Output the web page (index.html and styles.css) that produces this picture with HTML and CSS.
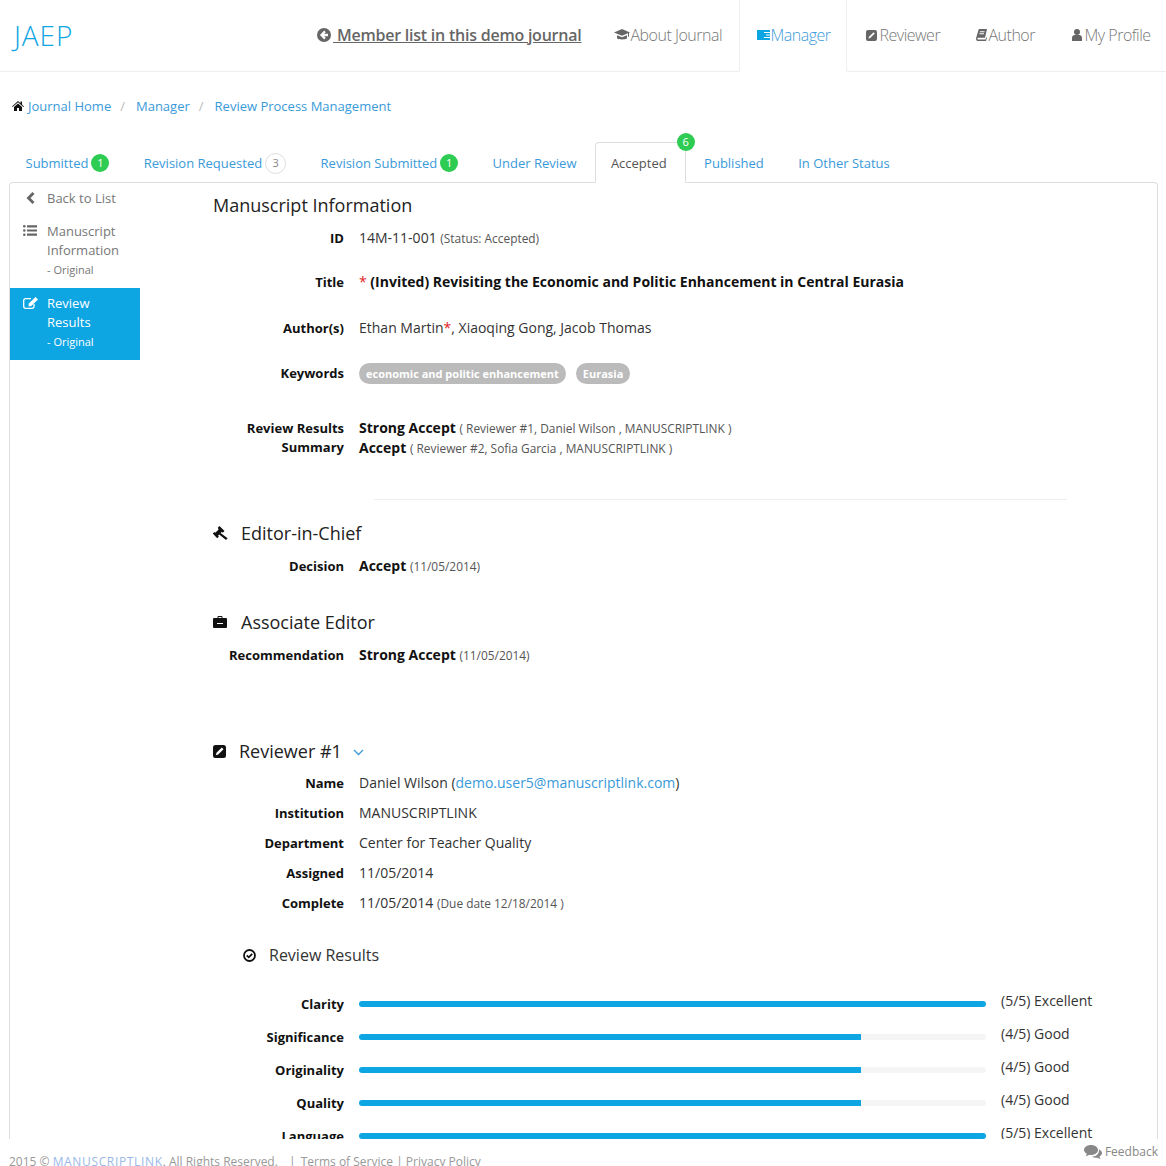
FILE: index.html
```html
<!DOCTYPE html>
<html lang="en">
<head>
    <meta charset="UTF-8">
    <title>JAEP</title>
    <link rel="stylesheet" href="styles.css">
</head>
<body>
<header class="topbar">
    <a class="logo">JAEP</a>
    <a class="member-link">
        <svg class="ico" width="14" height="14" viewBox="0 0 14 14"><path fill="#666" fill-rule="evenodd" d="M7 0a7 7 0 1 1 0 14A7 7 0 0 1 7 0zM7.2 2.6 2.9 7l4.3 4.400 1.600-1.600-1.700-1.600h3.900V5.800H7.100l1.700-1.600z"/></svg>
        <span>&nbsp;Member list in this demo journal</span>
    </a>
    <nav class="topnav">
        <a class="nav-item nav-about">
            <svg width="16" height="12" viewBox="0 0 16 12"><path fill="#666" d="M8 0 0 3.400l8 3.400 6-2.500v3.400h1V3.900l1-.5zM3 6.200v3c1 1.600 9 1.600 10 0v-3L8 8.300z"/></svg>About Journal
        </a>
        <a class="nav-item nav-active">
            <svg width="13" height="11" viewBox="0 0 13 11"><path fill="#0ea5e3" d="M0 1h13v10H0z"/><path fill="#fff" d="M7 3h6v1H7zM9 5.500h4v1H9zM7 8h6v1H7z"/></svg>Manager
        </a>
        <a class="nav-item nav-rev">
            <svg width="11" height="11" viewBox="0 0 11 11"><path fill="#666" fill-rule="evenodd" d="M2 0h7a2 2 0 0 1 2 2v7a2 2 0 0 1-2 2H2a2 2 0 0 1-2-2V2a2 2 0 0 1 2-2zm5.600 2.200L3 6.800 2.400 8.600l1.800-.6 4.600-4.600z"/></svg>Reviewer
        </a>
        <a class="nav-item nav-auth">
            <svg width="11" height="12" viewBox="0 0 11 12"><path fill="#666" fill-rule="evenodd" d="M2.800 0H11L9 8.800H2C1.300 8.800 1.300 10.600 2 10.600h7.500l1-2.600.5.800-1 3.200H1.800C.2 12-.2 10.200.2 8.800zM4 2.200l-.2 1h4.600l.2-1zM3.500 4.200l-.2 1h4.600l.2-1z"/></svg>Author
        </a>
        <a class="nav-item nav-prof">
            <svg width="10" height="12" viewBox="0 0 10 12"><circle cx="5" cy="3" r="3" fill="#666"/><path fill="#666" d="M0 12V8.500C0 7 1.500 6 2.500 6h5C8.500 6 10 7 10 8.500V12z"/></svg>My Profile
        </a>
    </nav>
</header>

<div class="breadcrumb">
    <svg width="12" height="10" viewBox="0 0 12 10"><path fill="#111" d="M6 0 0 5.400l.6.600L6 1.300 11.400 6l.6-.6-2-1.800V.6H8.500v1.700zM2 6v4h3V7h2v3h3V6L6 2.500z"/></svg>
    <a>Journal Home</a><span class="sep">/</span>
    <a>Manager</a><span class="sep">/</span>
    <a>Review Process Management</a>
</div>

<ul class="tabs">
    <li class="tab">Submitted <span class="badge">1</span></li>
    <li class="tab">Revision Requested <span class="badge badge-empty">3</span></li>
    <li class="tab">Revision Submitted <span class="badge">1</span></li>
    <li class="tab">Under Review</li>
    <li class="tab tab-active">Accepted<span class="badge badge-over">6</span></li>
    <li class="tab">Published</li>
    <li class="tab">In Other Status</li>
</ul>

<main class="panel">
    <aside class="sidebar">
        <a class="side-item side-back">
            <svg width="9" height="12" viewBox="0 0 9 12"><path fill="#666" d="M6.500 0 8.500 2 4.500 6l4 4-2 2L.5 6z"/></svg>
            <span>Back to List</span>
        </a>
        <a class="side-item side-info">
            <svg width="14" height="11" viewBox="0 0 14 11"><circle cx="1.300" cy="1.300" r="1.300" fill="#666"/><circle cx="1.300" cy="5.500" r="1.300" fill="#666"/><circle cx="1.300" cy="9.700" r="1.300" fill="#666"/><path fill="#666" d="M4 .2h10v2.200H4zM4 4.400h10v2.200H4zM4 8.600h10v2.200H4z"/></svg>
            <span>Manuscript Information<small>- Original</small></span>
        </a>
        <a class="side-item side-active">
            <svg width="15" height="12" viewBox="0 0 15 12"><path fill="none" stroke="#fff" stroke-width="1.300" d="M11 7v2.500A1.800 1.800 0 0 1 9.200 11.300H2.500A1.800 1.800 0 0 1 .7 9.500V3.500A1.800 1.800 0 0 1 2.500 1.700H8"/><path fill="#fff" d="M12.500 0 15 2.500 8 9.200H5.600V6.700z"/></svg>
            <span>Review Results<small>- Original</small></span>
        </a>
    </aside>

    <section class="content">
        <h2 class="title-main">Manuscript Information</h2>

        <div class="row row-id"><div class="lbl">ID</div><div class="val">14M-11-001 <small>(Status: Accepted)</small></div></div>
        <div class="row row-title"><div class="lbl">Title</div><div class="val"><b><span class="red">*</span> (Invited) Revisiting the Economic and Politic Enhancement in Central Eurasia</b></div></div>
        <div class="row row-author"><div class="lbl">Author(s)</div><div class="val">Ethan Martin<span class="red">*</span>, Xiaoqing Gong, Jacob Thomas</div></div>
        <div class="row row-keys"><div class="lbl">Keywords</div><div class="val"><span class="pill">economic and politic enhancement</span><span class="pill">Eurasia</span></div></div>
        <div class="row row-summary">
            <div class="lbl">Review Results Summary</div>
            <div class="val">
                <div class="sum-line"><b>Strong Accept</b> <small>( Reviewer #1, Daniel Wilson , MANUSCRIPTLINK )</small></div>
                <div class="sum-line"><b>Accept</b> <small>( Reviewer #2, Sofia Garcia , MANUSCRIPTLINK )</small></div>
            </div>
        </div>

        <hr class="divider">

        <h3 class="head head-chief">
            <svg width="15" height="14" viewBox="0 0 15 14"><path fill="#111" d="M6.500 0 11.500 5 9.800 6.700 8.900 5.800 7.600 7.100 14.600 12.200 13 14 6.200 8.500 5 9.700 5.900 10.600 4.200 12.300-.2 7.500 1.500 6 2.300 6.800 5.600 3.400 4.800 1.700z"/></svg>
            Editor-in-Chief
        </h3>
        <div class="row row-decision"><div class="lbl">Decision</div><div class="val"><b>Accept</b> <small>(11/05/2014)</small></div></div>

        <h3 class="head head-assoc">
            <svg width="14" height="12" viewBox="0 0 14 12"><path fill="#111" fill-rule="evenodd" d="M4.500 2V1a1 1 0 0 1 1-1h3a1 1 0 0 1 1 1v1H13a1 1 0 0 1 1 1v8a1 1 0 0 1-1 1H1a1 1 0 0 1-1-1V3a1 1 0 0 1 1-1zm1-1v1h3V1zM4 7v1h6V7z"/></svg>
            Associate Editor
        </h3>
        <div class="row row-decision"><div class="lbl">Recommendation</div><div class="val"><b>Strong Accept</b> <small>(11/05/2014)</small></div></div>

        <h3 class="head head-reviewer">
            <svg width="13" height="13" viewBox="0 0 13 13"><path fill="#111" fill-rule="evenodd" d="M2.500 0h8A2.500 2.500 0 0 1 13 2.500v8a2.500 2.500 0 0 1-2.500 2.500h-8A2.500 2.500 0 0 1 0 10.500v-8A2.500 2.500 0 0 1 2.500 0zm6.300 2.500L3.500 7.800 2.800 10.200l2.400-.7 5.300-5.300z"/></svg>
            <span class="rev-name">Reviewer #1</span>
            <svg class="chev" width="11" height="7" viewBox="0 0 11 7"><path fill="none" stroke="#3a9ad9" stroke-width="1.300" d="M1 1l4.500 4.500L10 1"/></svg>
        </h3>
        <div class="row row-rev"><div class="lbl">Name</div><div class="val">Daniel Wilson (<a class="link">demo.user5@manuscriptlink.com</a>)</div></div>
        <div class="row row-rev"><div class="lbl">Institution</div><div class="val">MANUSCRIPTLINK</div></div>
        <div class="row row-rev"><div class="lbl">Department</div><div class="val">Center for Teacher Quality</div></div>
        <div class="row row-rev"><div class="lbl">Assigned</div><div class="val">11/05/2014</div></div>
        <div class="row row-rev"><div class="lbl">Complete</div><div class="val">11/05/2014 <small>(Due date 12/18/2014 )</small></div></div>

        <h4 class="sub-head">
            <svg width="13" height="13" viewBox="0 0 13 13"><circle cx="6.500" cy="6.500" r="5.500" fill="none" stroke="#111" stroke-width="1.800"/><path fill="none" stroke="#111" stroke-width="1.800" d="M3.800 6.300l2 2 3.400-3.400"/></svg>
            Review Results
        </h4>

        <div class="score"><div class="lbl">Clarity</div><div class="track"><div class="fill" style="width:100%"></div></div><div class="score-text">(5/5) Excellent</div></div>
        <div class="score"><div class="lbl">Significance</div><div class="track"><div class="fill" style="width:80%"></div></div><div class="score-text">(4/5) Good</div></div>
        <div class="score"><div class="lbl">Originality</div><div class="track"><div class="fill" style="width:80%"></div></div><div class="score-text">(4/5) Good</div></div>
        <div class="score"><div class="lbl">Quality</div><div class="track"><div class="fill" style="width:80%"></div></div><div class="score-text">(4/5) Good</div></div>
        <div class="score"><div class="lbl">Language</div><div class="track"><div class="fill" style="width:100%"></div></div><div class="score-text">(5/5) Excellent</div></div>
    </section>
</main>

<footer class="footer">
    <div class="copy">2015 &copy; <a>MANUSCRIPTLINK</a>. All Rights Reserved. <span class="foot-sep">|</span> Terms of Service <span class="foot-sep2">|</span> Privacy Policy</div>
    <a class="feedback">
        <svg width="18" height="15" viewBox="0 0 18 15"><path fill="#888" d="M7 0c3.900 0 7 2.200 7 5s-3.100 5-7 5c-.6 0-1.200 0-1.800-.2C4 10.700 2.700 11 1.500 11.200 2.200 10.400 2.700 9.600 2.800 8.700 1.100 7.800 0 6.500 0 5 0 2.200 3.100 0 7 0z"/><path fill="#888" d="M15 4.500c1.800.8 3 2.100 3 3.600 0 1.400-1 2.700-2.500 3.500.2.900.6 1.700 1.200 2.400-1.100-.2-2.300-.6-3.300-1.300-.5.100-1 .1-1.400.1-1.600 0-3-.4-4.200-1.100 3.900-.1 7.200-2.700 7.200-6z"/></svg>
        Feedback
    </a>
</footer>
</body>
</html>
```

FILE: styles.css
```css
html, body {
    height: 100%;
}
body {
    margin: 0;
    height: 100vh;
    display: flex;
    flex-direction: column;
    overflow: hidden;
    font-family: "Open Sans", sans-serif;
    font-size: 14px;
    line-height: 20px;
    color: #333;
    background: #fff;
}
a {
    color: #3a9ad9;
    text-decoration: none;
}
small {
    font-size: 11.9px;
    color: #555;
}
b {
    font-weight: 700;
    color: #111;
}
.red {
    color: #e02222;
    font-weight: 400;
}

/* top bar */
.topbar {
    height: 72px;
    box-sizing: border-box;
    flex: none;
    display: flex;
    align-items: center;
    border-bottom: 1px solid #eee;
    padding: 0 0 2px 13px;
}
.logo {
    font-size: 28px;
    font-weight: 300;
    color: #0ea5e3;
    letter-spacing: 0.9px;
    margin-left: 1px;
    width: 303px;
}
.member-link {
    color: #666;
    font-size: 16px;
    font-weight: 600;
    letter-spacing: -0.23px;
    display: flex;
    align-items: center;
}
.member-link svg {
    margin-right: 2px;
}
.member-link span {
    text-decoration: underline;
}
.topnav {
    display: flex;
    height: 72px;
    margin-left: 33px;
    align-self: flex-start;
}
.nav-item {
    display: flex;
    align-items: center;
    color: #777;
    font-size: 16px;
    font-weight: 300;
    letter-spacing: -0.5px;
    box-sizing: border-box;
    padding-bottom: 2px;
}
.nav-about {
    width: 125px;
}
.nav-active {
    width: 108px;
    padding-left: 17px;
    color: #3a9ad9;
    border-left: 1px solid #eee;
    border-right: 1px solid #eee;
    border-bottom: 1px solid #fff;
    background: #fff;
}
.nav-rev {
    width: 110px;
    padding-left: 19px;
    gap: 2px;
}
.nav-auth {
    width: 96px;
    padding-left: 19px;
    gap: 1px;
}
.nav-prof {
    padding-left: 19px;
    gap: 2px;
}

/* breadcrumb */
.breadcrumb {
    flex: none;
    margin-top: 24px;
    padding-left: 12px;
    font-size: 13px;
    display: flex;
    align-items: center;
}
.breadcrumb svg {
    margin-right: 4px;
}
.sep {
    color: #bbb;
    margin: 0 11px 0 9px;
}

/* tabs */
.tabs {
    flex: none;
    list-style: none;
    margin: 26px 0 0;
    padding: 0 0 0 9.5px;
    display: flex;
    height: 41px;
    position: relative;
    z-index: 1;
    margin-bottom: -1px;
}
.tab {
    padding: 0 15px;
    margin-right: 2.4px;
    display: flex;
    align-items: center;
    gap: 3px;
    color: #3a9ad9;
    font-size: 13px;
    border: 1px solid transparent;
    border-bottom: 0;
    position: relative;
}
.tab-active {
    color: #555;
    background: #fff;
    border-color: #ddd;
    border-bottom: 1px solid #fff;
    border-radius: 4px 4px 0 0;
    height: 41px;
    box-sizing: border-box;
    padding: 0 18px 0 15px;
}
.badge {
    min-width: 18px;
    height: 18px;
    line-height: 18px;
    border-radius: 50%;
    background: #2ecc52;
    color: #fff;
    font-size: 11px;
    text-align: center;
}
.badge-empty {
    background: #fff;
    color: #888;
    border: 1px solid #ddd;
    height: 19px;
    min-width: 19px;
}
.badge-over {
    position: absolute;
    top: -10px;
    right: -10px;
}

/* panel */
.panel {
    flex: 1;
    min-height: 0;
    overflow: hidden;
    margin: 0 8px 0 9px;
    border: 1px solid #ddd;
    border-bottom: 0;
    border-radius: 4px 4px 0 0;
    display: flex;
}
.sidebar {
    width: 130px;
    flex: none;
    padding-top: 6px;
    font-size: 13px;
    line-height: 19px;
}
.side-item {
    display: flex;
    color: #777;
    padding-left: 13px;
}
.side-item svg {
    flex: none;
    margin-top: 3px;
}
.side-item span {
    margin-left: 9px;
    max-width: 78px;
}
.side-item small {
    display: block;
    font-size: 11px;
    color: #777;
    line-height: 20px;
}
.side-back {
    height: 23px;
    padding-left: 16px;
}
.side-back span {
    margin-left: 12px;
}
.side-info {
    margin-top: 10px;
    padding-bottom: 8px;
}
.side-active {
    background: #0ea5e3;
    color: #fff;
    padding-top: 6px;
    padding-bottom: 8px;
}
.side-active small {
    color: #fff;
}
.side-info span {
    margin-left: 10px;
}
.side-active span {
    margin-left: 9px;
}
.content {
    flex: 1;
    padding-left: 73px;
    min-width: 0;
}
.title-main {
    font-size: 18px;
    font-weight: 400;
    line-height: 24px;
    margin: 10px 0 0;
    color: #222;
}

/* rows */
.row {
    display: flex;
}
.lbl {
    width: 131px;
    flex: none;
    margin-right: 15px;
    text-align: right;
    font-weight: 700;
    color: #111;
    font-size: 13px;
}
.val {
    font-size: 14px;
    color: #333;
}
.row-id { margin-top: 11px; }
.row-title { margin-top: 24px; }
.row-author { margin-top: 26px; }
.row-keys { margin-top: 25px; }
.row-summary { margin-top: 34px; }
.row-summary .lbl {
    padding-left: 20px;
    padding-top: 1px;
    box-sizing: border-box;
    line-height: 19px;
}
.sum-line {
    line-height: 19px;
}
.pill {
    display: inline-block;
    background: #bbb;
    color: #fff;
    font-size: 11px;
    font-weight: 700;
    line-height: 21px;
    padding: 0 7px;
    border-radius: 11px;
    margin-right: 10px;
}
.divider {
    border: 0;
    border-top: 1px solid #eee;
    margin: 41px 0 0 161px;
    width: 693px;
}
.head {
    display: flex;
    align-items: center;
    font-size: 18px;
    font-weight: 400;
    line-height: 24px;
    color: #222;
    margin: 0;
}
.head svg {
    margin-right: 13px;
}
.head-chief { margin-top: 21px; }
.head-assoc { margin-top: 34px; }
.head-assoc svg {
    margin-right: 14px;
}
.head-reviewer { margin-top: 74px; }
.head-reviewer .chev {
    margin: 2px 0 0 11px;
}
.row-decision { margin-top: 11px; }
.row-rev { margin-top: 10px; }
.link {
    color: #3a9ad9;
}
.sub-head {
    display: flex;
    align-items: center;
    font-size: 16px;
    font-weight: 400;
    line-height: 22px;
    color: #333;
    margin: 31px 0 0 30px;
}
.sub-head svg {
    margin-right: 13px;
}

/* score bars */
.score {
    display: flex;
    height: 33px;
    align-items: flex-start;
}
.sub-head + .score { margin-top: 28px; }
.track {
    width: 627px;
    height: 6px;
    margin-top: 7px;
    flex: none;
    background: #f5f5f5;
    border-radius: 3px;
    overflow: hidden;
}
.fill {
    height: 100%;
    background: #0ea5e3;
}
.score-text {
    margin: -3px 0 0 15px;
    font-size: 14px;
    color: #333;
}

/* footer */
.footer {
    flex: none;
    height: 27px;
    display: flex;
    justify-content: space-between;
    padding: 0 8px 0 9px;
    font-size: 12px;
    color: #999;
    background: #fff;
    overflow: hidden;
}
.copy {
    padding-top: 13px;
}
.copy a {
    color: #9ab8e8;
    letter-spacing: 0.65px;
}
.foot-sep {
    margin: 0 2px 0 8px;
}
.feedback {
    color: #888;
    display: flex;
    align-items: center;
    gap: 3px;
    height: 26px;
}
```
